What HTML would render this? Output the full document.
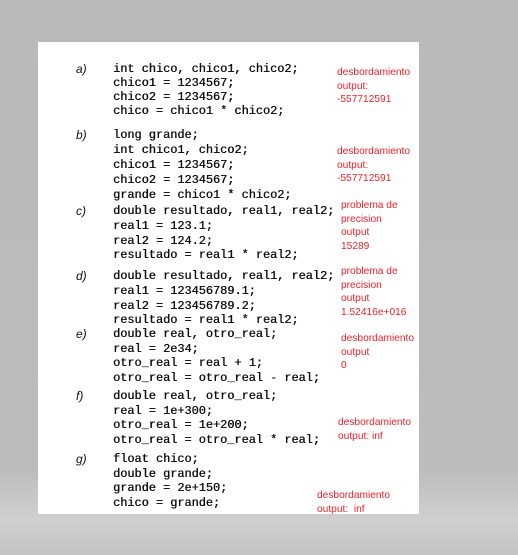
<!DOCTYPE html>
<html><head><style>
body{margin:0;width:518px;height:555px;overflow:hidden;background:linear-gradient(#b9b9b9 0,#bcbcbc 470px,#d0d0ce 520px,#c4c4c4 555px);position:relative}
#card{position:absolute;left:38px;top:42px;width:381px;height:472px;background:#fff}
.c{position:absolute;left:113px;font:11.9px/14px "Liberation Mono",monospace;color:#111;white-space:pre;text-shadow:0.4px 0 0 #111}
.l{position:absolute;left:76px;font:italic 12px/14px "Liberation Sans",sans-serif;color:#111}
.r{position:absolute;font:10.2px/13.5px "Liberation Sans",sans-serif;color:#f0202a;white-space:pre}
</style></head><body>
<div id="card"></div>
<div class="l" style="top:62px">a)</div>
<div class="c" style="top:62px">int chico, chico1, chico2;
chico1 = 1234567;
chico2 = 1234567;
chico = chico1 * chico2;</div>
<div class="r" style="left:337px;top:66px">desbordamiento
output:
-557712591</div>
<div class="l" style="top:128px">b)</div>
<div class="c" style="top:128px;line-height:15px">long grande;
int chico1, chico2;
chico1 = 1234567;
chico2 = 1234567;
grande = chico1 * chico2;</div>
<div class="r" style="left:337px;top:145px">desbordamiento
output:
-557712591</div>
<div class="l" style="top:204px">c)</div>
<div class="c" style="top:204px;line-height:14.8px">double resultado, real1, real2;
real1 = 123.1;
real2 = 124.2;
resultado = real1 * real2;</div>
<div class="r" style="left:341px;top:199px">problema de
precision
output
15289</div>
<div class="l" style="top:269px">d)</div>
<div class="c" style="top:269px;line-height:14.8px">double resultado, real1, real2;
real1 = 123456789.1;
real2 = 123456789.2;
resultado = real1 * real2;</div>
<div class="r" style="left:341px;top:265px">problema de
precision
output
1.52416e+016</div>
<div class="l" style="top:327px">e)</div>
<div class="c" style="top:327px;line-height:14.6px">double real, otro_real;
real = 2e34;
otro_real = real + 1;
otro_real = otro_real - real;</div>
<div class="r" style="left:341px;top:332px">desbordamiento
output
0</div>
<div class="l" style="top:389px">f)</div>
<div class="c" style="top:389px;line-height:14.6px">double real, otro_real;
real = 1e+300;
otro_real = 1e+200;
otro_real = otro_real * real;</div>
<div class="r" style="left:338px;top:416px">desbordamiento
output: inf</div>
<div class="l" style="top:452px">g)</div>
<div class="c" style="top:452px;line-height:14.6px">float chico;
double grande;
grande = 2e+150;
chico = grande;</div>
<div class="r" style="left:317px;top:489px">desbordamiento
output:  inf</div>
</body></html>
